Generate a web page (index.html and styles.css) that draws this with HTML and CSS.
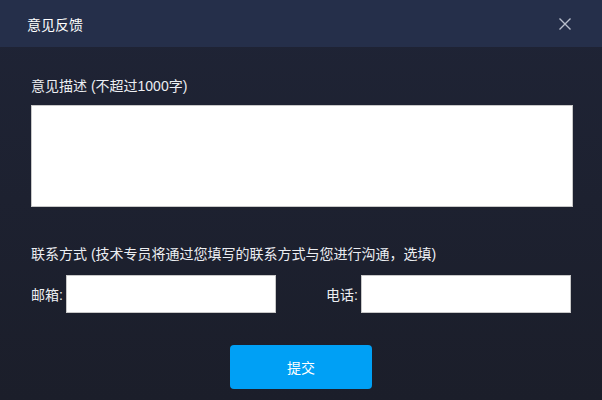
FILE: index.html
```html
<!DOCTYPE html>
<html lang="zh-CN">
<head>
  <meta charset="UTF-8">
  <meta name="viewport" content="width=device-width, initial-scale=1.0">
  <title>意见反馈</title>
  <link rel="stylesheet" href="styles.css">
</head>
<body>
  <div class="dialog">
    <header class="dialog-header">
      <h1>意见反馈</h1>
      <button class="close" aria-label="关闭">
        <svg width="12" height="12" viewBox="0 0 12 12">
          <path d="M0.5 0.5 L11.5 11.5 M11.5 0.5 L0.5 11.5" stroke="#b9bfcc" stroke-width="1.4" fill="none"/>
        </svg>
      </button>
    </header>

    <div class="dialog-body">
      <label class="field-label">意见描述 (不超过1000字)</label>
      <textarea class="desc"></textarea>

      <label class="field-label contact-label">联系方式 (技术专员将通过您填写的联系方式与您进行沟通，选填)</label>
      <div class="contact-row">
        <div class="contact-item">
          <span>邮箱:</span>
          <input type="text" class="text-input">
        </div>
        <div class="contact-item">
          <span>电话:</span>
          <input type="text" class="text-input">
        </div>
      </div>

      <button class="submit">提交</button>
    </div>
  </div>
</body>
</html>
```

FILE: styles.css
```css
body {
  margin: 0;
  padding: 0;
  font-family: 'Liberation Sans', 'Noto Sans CJK SC', sans-serif;
  background-color: #1e2233;
}
.dialog {
  width: 602px;
  height: 400px;
  background: linear-gradient(#1f2436, #1b1e2a);
  color: #ffffff;
  overflow: hidden;
}
.dialog-header {
  height: 47px;
  background-color: #252f4a;
  display: flex;
  align-items: center;
  justify-content: space-between;
  padding: 0 31px 0 27px;
}
.dialog-header h1 {
  margin: 0;
  font-size: 14px;
  font-weight: normal;
}
.close {
  background: none;
  border: none;
  padding: 0;
  width: 12px;
  height: 12px;
  cursor: pointer;
}
.close svg {
  display: block;
}
.dialog-body {
  padding: 30px 29px 0 31px;
  display: flex;
  flex-direction: column;
}
.field-label {
  font-size: 14px;
  line-height: 18px;
  color: #eceef2;
}
.desc {
  margin-top: 10px;
  height: 102px;
  box-sizing: border-box;
  border: 1px solid #c8c8c8;
  background: #ffffff;
  resize: none;
  padding: 4px;
}
.contact-label {
  margin-top: 38px;
}
.contact-row {
  display: flex;
  gap: 50px;
  margin-top: 12px;
}
.contact-item {
  display: flex;
  align-items: center;
  gap: 3px;
  font-size: 14px;
  color: #eceef2;
}
.text-input {
  width: 210px;
  height: 38px;
  box-sizing: border-box;
  border: 1px solid #c8c8c8;
  background: #ffffff;
  padding: 0 6px;
}
.submit {
  align-self: center;
  margin: 32px 0 0 -2px;
  width: 142px;
  height: 44px;
  border: none;
  border-radius: 4px;
  background-color: #00a0f5;
  color: #ffffff;
  font-family: inherit;
  font-size: 14px;
  cursor: pointer;
}
```
